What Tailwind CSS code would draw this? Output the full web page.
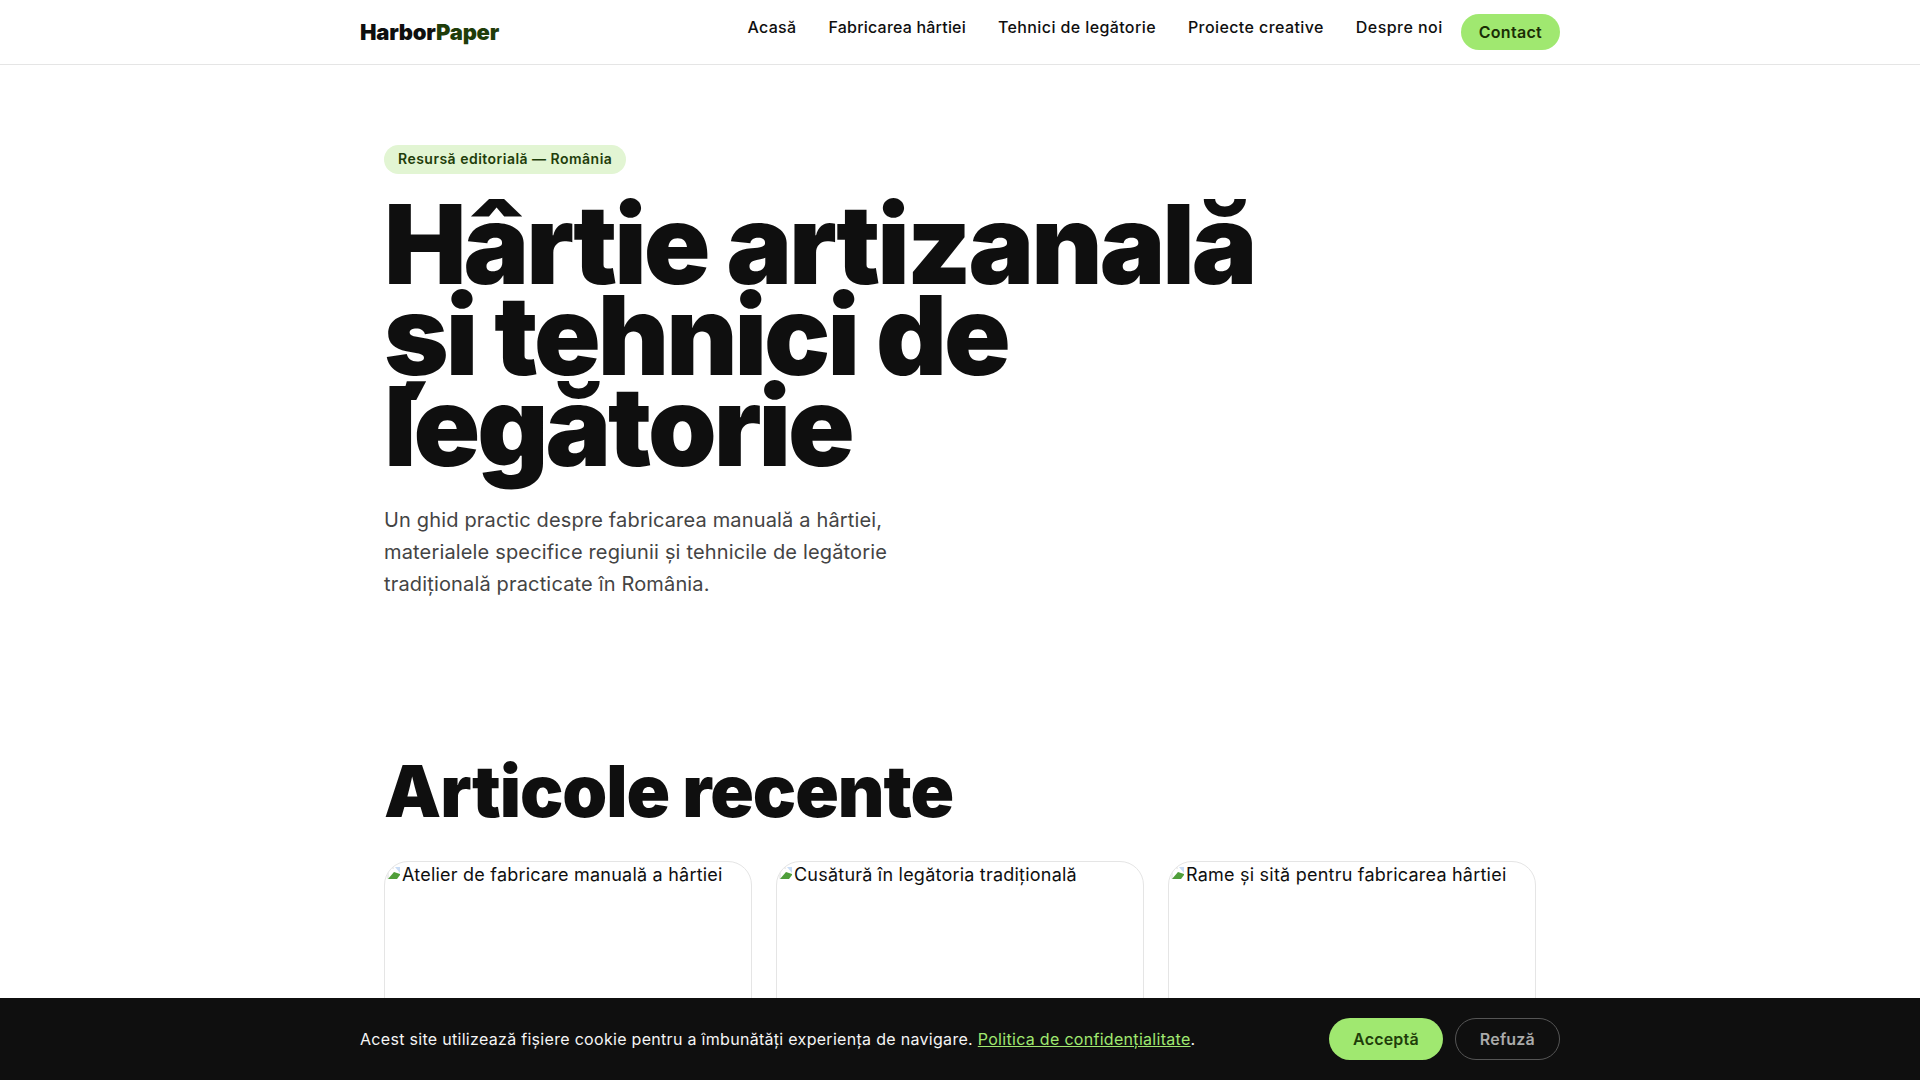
<!DOCTYPE html>
<html lang="ro">
<head>
  <meta charset="UTF-8">
  <meta name="viewport" content="width=device-width, initial-scale=1.0">
  <title>HarborPaper</title>
  <script src="https://cdn.jsdelivr.net/npm/@tailwindcss/browser@4"></script>
</head>
<body class="bg-white text-[#0f0f0f] font-['Inter',sans-serif] [font-optical-sizing:none] h-screen overflow-hidden">
  <!-- header -->
  <header class="h-[65px] border-b border-[#e5e5e5]">
    <div class="max-w-[1200px] mx-auto h-full flex items-center justify-between">
      <a href="#" class="text-[22px] font-black tracking-[-0.22px] mt-[1px]">Harbor<span class="text-[#1f3d0a]">Paper</span></a>
      <nav class="flex items-center">
        <ul class="flex gap-8 text-[16px] font-medium mb-[10px]">
          <li class="tracking-[0.35px]">Acasă</li>
          <li class="tracking-[0.2px]">Fabricarea hârtiei</li>
          <li class="tracking-[0.39px]">Tehnici de legătorie</li>
          <li class="tracking-[0.41px]">Proiecte creative</li>
          <li class="tracking-[0.45px]">Despre noi</li>
        </ul>
        <a href="#" class="ml-[18px] h-[36px] px-[18px] flex items-center rounded-full bg-[#a0e870] text-[#1a2e05] text-[16px] font-semibold tracking-[0.3px]">Contact</a>
      </nav>
    </div>
  </header>

  <main class="max-w-[1200px] mx-auto px-6">
    <!-- hero -->
    <section class="pt-[80px]">
      <span class="inline-block h-[29px] leading-[27px] px-[14px] rounded-full bg-[#e2f5d3] text-[#1f3d0a] text-[14px] font-semibold tracking-[0.48px]">Resursă editorială — România</span>
      <h1 class="mt-[25px] max-w-[900px] text-[110px] leading-[91px] font-black tracking-[-3px]">Hârtie artizanală și tehnici de legătorie</h1>
      <p class="mt-[33px] max-w-[560px] text-[20px] leading-[31.8px] tracking-[0.16px] text-[#444444]">Un ghid practic despre fabricarea manuală a hârtiei, materialele specifice regiunii și tehnicile de legătorie tradițională practicate în România.</p>
    </section>

    <!-- articole -->
    <section class="mt-[151px]">
      <h2 class="text-[72px] leading-[80px] font-black tracking-[-1.06px]">Articole recente</h2>
      <div class="mt-[30px] grid grid-cols-3 gap-6">
        <article class="h-[400px] rounded-[24px] border border-[#e5e5e5] overflow-hidden">
          <div class="flex text-[18px] leading-[26px] tracking-[0.22px] pl-[1px]">
            <svg class="w-4 h-4 mt-[3px] shrink-0" viewBox="0 0 16 16"><path d="M2 14V3h6" fill="none" stroke="#dcdcdc"/><path d="M9 2h5v6z" fill="#c9dcf5"/><path d="M2 14l6-7 6 2v1l-3 4z" fill="#4f9e3a"/></svg>
            <span>Atelier de fabricare manuală a hârtiei</span>
          </div>
        </article>
        <article class="h-[400px] rounded-[24px] border border-[#e5e5e5] overflow-hidden">
          <div class="flex text-[18px] leading-[26px] tracking-[0.22px] pl-[1px]">
            <svg class="w-4 h-4 mt-[3px] shrink-0" viewBox="0 0 16 16"><path d="M2 14V3h6" fill="none" stroke="#dcdcdc"/><path d="M9 2h5v6z" fill="#c9dcf5"/><path d="M2 14l6-7 6 2v1l-3 4z" fill="#4f9e3a"/></svg>
            <span>Cusătură în legătoria tradițională</span>
          </div>
        </article>
        <article class="h-[400px] rounded-[24px] border border-[#e5e5e5] overflow-hidden">
          <div class="flex text-[18px] leading-[26px] tracking-[0.22px] pl-[1px]">
            <svg class="w-4 h-4 mt-[3px] shrink-0" viewBox="0 0 16 16"><path d="M2 14V3h6" fill="none" stroke="#dcdcdc"/><path d="M9 2h5v6z" fill="#c9dcf5"/><path d="M2 14l6-7 6 2v1l-3 4z" fill="#4f9e3a"/></svg>
            <span>Rame și sită pentru fabricarea hârtiei</span>
          </div>
        </article>
      </div>
    </section>
  </main>

  <!-- cookie bar -->
  <div class="fixed bottom-0 left-0 right-0 h-[82px] bg-[#0f0f0f]">
    <div class="max-w-[1200px] mx-auto h-full flex items-center justify-between">
      <p class="text-[16px] tracking-[0.3px] text-[#f5f5f5]">Acest site utilizează fișiere cookie pentru a îmbunătăți experiența de navigare. <a href="#" class="text-[#a0e870] underline">Politica de confidențialitate</a>.</p>
      <div class="flex items-center gap-3">
        <button class="h-[42px] px-6 rounded-full bg-[#a0e870] text-[#1f3d0a] text-[16px] font-semibold tracking-[0.2px]">Acceptă</button>
        <button class="h-[42px] px-6 rounded-full border border-[#555555] text-[#aaaaaa] text-[16px] font-semibold tracking-[0.2px]">Refuză</button>
      </div>
    </div>
  </div>
</body>
</html>
